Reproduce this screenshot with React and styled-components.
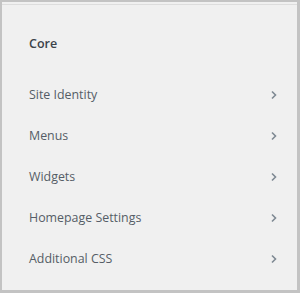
import React from 'react';
import styled, { createGlobalStyle } from 'styled-components';

const ITEMS = ['Site Identity', 'Menus', 'Widgets', 'Homepage Settings', 'Additional CSS'];

const GlobalStyle = createGlobalStyle`
  html, body {
    margin: 0;
    padding: 0;
    background: #f0f0f0;
  }
  body {
    font-family: "Open Sans", "Noto Sans", sans-serif;
  }
`;

const Frame = styled.div`
  box-sizing: border-box;
  width: 300px;
  height: 293px;
  background: #f0f0f0;
  border: 2px solid #c3c3c3;
  border-right-width: 3px;
  border-bottom-width: 3px;
`;

const Inner = styled.div`
  border-top: 1px solid #dddddd;
  margin-top: 2px;
  height: calc(100% - 3px);
`;

const Title = styled.h2`
  margin: 0;
  padding: 28px 0 0 27px;
  height: 41px;
  line-height: 22px;
  font-size: 12.5px;
  font-weight: 600;
  color: #3c434a;
  box-sizing: content-box;
`;

const List = styled.ul`
  list-style: none;
  margin: 0;
  padding: 0;
`;

const Row = styled.li`
  display: flex;
  align-items: center;
  justify-content: space-between;
  height: 41px;
  padding: 0 19px 0 27px;
  font-size: 12.4px;
  color: #555d66;
`;

const Chevron = () => (
  <svg width="8" height="10" viewBox="0 0 8 10">
    <path d="M2 1.5 L5.5 5 L2 8.5" fill="none" stroke="#7e8993" strokeWidth="1.6" />
  </svg>
);

const App = () => (
  <>
    <GlobalStyle />
    <Frame>
      <Inner>
        <Title>Core</Title>
        <List>
          {ITEMS.map(item => (
            <Row key={item}>
              <span>{item}</span>
              <Chevron />
            </Row>
          ))}
        </List>
      </Inner>
    </Frame>
  </>
);

export default App;
